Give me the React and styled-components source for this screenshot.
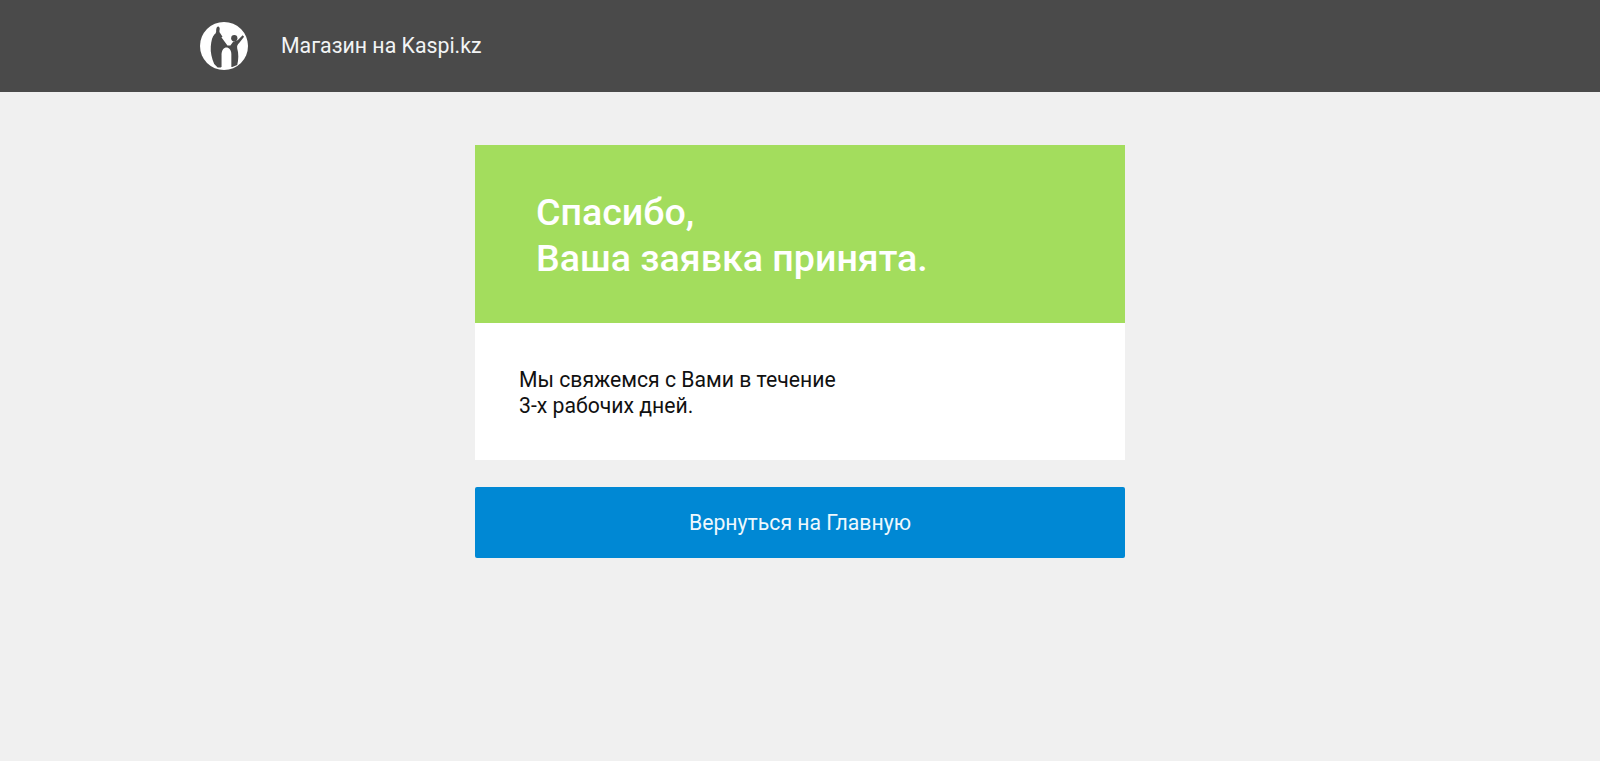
import React from "react";
import styled, { createGlobalStyle } from "styled-components";

const Global = createGlobalStyle`
  html, body { margin: 0; padding: 0; background: #f0f0f0; }
  body { font-family: Roboto, "Liberation Sans", sans-serif; min-height: 761px; }
`;

const Header = styled.header`
  height: 92px;
  background: #4a4a4a;
  display: flex;
  align-items: center;
  padding-left: 200px;
  box-sizing: border-box;
`;

const Logo = styled.svg`
  width: 48px;
  height: 48px;
  display: block;
`;

const Brand = styled.a`
  margin-left: 33px;
  margin-top: -1px;
  color: #f2f4f5;
  font-size: 21.3px;
  line-height: 24px;
  text-decoration: none;
`;

const Main = styled.main`
  width: 650px;
  margin: 53px 0 0 475px;
`;

const Hero = styled.div`
  height: 178px;
  background: #a3dd5d;
  padding: 44px 0 0 61px;
  box-sizing: border-box;
`;

const Title = styled.h1`
  margin: 0;
  color: #fff;
  font-size: 37.6px;
  line-height: 46px;
  font-weight: 500;
`;

const Body = styled.div`
  height: 137px;
  background: #fff;
  padding: 44px 0 0 44px;
  box-sizing: border-box;
`;

const Message = styled.p`
  margin: 0;
  color: #111;
  font-size: 21.2px;
  line-height: 26px;
`;

const Button = styled.button`
  display: block;
  width: 100%;
  height: 71px;
  margin-top: 27px;
  border: 0;
  border-radius: 2px;
  background: #0088d4;
  color: #eef8fd;
  font-family: inherit;
  font-size: 21.2px;
  cursor: pointer;
`;

export default function App() {
  return (
    <>
      <Global />
      <Header>
        <Logo viewBox="0 0 49 49" aria-label="Kaspi">
          <circle cx="24.5" cy="24.5" r="24.5" fill="#fff" />
          <g fill="#4a4a4a">
            <path d="M18.500 4.500c1.200.3 1.800 1.400 1.600 2.800-.2 1.500-.6 2.700.4 4L23 15l-4.500 2-4-3c.5-1.500 1.800-2.500 2-4.200.1-2-.2-4.500 2-5.300z" />
            <circle cx="35" cy="16.500" r="3.200" />
            <path d="M15 12.500C12.500 15 11.500 19 11 25c-.5 6 1 12 3.500 18l3.500 3.500h3L22 46h11l5-2c1.500-6 1.500-12 0-17-.5-3 .5-4 2-5.500l5-6.500-1.500-1.500-4 4c-1.500 1.500-3.500 2-5.500 2.500L31 24h-3l-8-11z" />
          </g>
          <path fill="#fff" d="M22 47V33c0-4.500 2.500-7 5-7s5 2.500 5 7v14z" />
        </Logo>
        <Brand>Магазин на Kaspi.kz</Brand>
      </Header>
      <Main>
        <Hero>
          <Title>
            Спасибо,
            <br />
            Ваша заявка принята.
          </Title>
        </Hero>
        <Body>
          <Message>
            Мы свяжемся с Вами в течение
            <br />
            3-х рабочих дней.
          </Message>
        </Body>
        <Button>Вернуться на Главную</Button>
      </Main>
    </>
  );
}
